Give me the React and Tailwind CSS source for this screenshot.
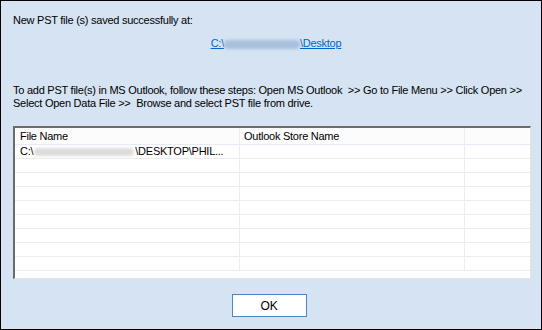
import React from "react";

const rows = Array.from({ length: 9 });

function Blur({ className }) {
  return <span className={`inline-block align-middle rounded-sm blur-[1.5px] ${className}`} />;
}

export default function App() {
  return (
    <div
      className="w-[542px] h-[330px] border border-black bg-[#d5e3f2] text-[11px] text-black tracking-[-0.25px] flex flex-col"
      style={{ fontFamily: '"Liberation Sans", Arial, sans-serif' }}
    >
      <div className="pl-3 pt-[12px] leading-[14px]">New PST file (s) saved successfully at:</div>

      <div className="flex justify-center pl-[10px] mt-[9px] leading-[14px]">
        <span className="text-[#0066cc] underline whitespace-nowrap">
          C:\
          <Blur className="w-[76px] h-[9px] bg-[#a9c0dc]" />
          \Desktop
        </span>
      </div>

      <div className="pl-3 mt-[34px] leading-[13px] whitespace-nowrap">
        <div>To add PST file(s) in MS Outlook, follow these steps: Open MS Outlook&nbsp; &gt;&gt; Go to File Menu &gt;&gt; Click Open &gt;&gt;</div>
        <div>Select Open Data File &gt;&gt;&nbsp; Browse and select PST file from drive.</div>
      </div>

      <div className="mx-3 mt-[16px] w-[518px] h-[153px] border-t-2 border-l-2 border-t-[#6b6b6b] border-l-[#6b6b6b] border-r border-b border-r-[#e3e3e3] border-b-[#e3e3e3] bg-white overflow-hidden">
        <div className="flex h-[17px] items-center bg-[#fcfcfc] border-b border-[#e4ebf4]">
          <div className="w-[225px] pl-[5px] border-r border-[#e8eef5] h-full flex items-center">File Name</div>
          <div className="w-[225px] pl-[4px] border-r border-[#e8eef5] h-full flex items-center">Outlook Store Name</div>
          <div className="flex-1" />
        </div>
        {rows.map((_, i) => (
          <div key={i} className="flex h-[14px] border-b border-[#ececec]">
            <div className="w-[225px] pl-[5px] border-r border-[#ececec] flex items-center whitespace-nowrap overflow-hidden leading-[13px]">
              {i === 0 && (
                <>
                  C:\
                  <Blur className="w-[100px] h-[8px] bg-[#dcdcdc] mx-[1px]" />
                  \DESKTOP\PHIL...
                </>
              )}
            </div>
            <div className="w-[225px] border-r border-[#ececec]" />
            <div className="flex-1" />
          </div>
        ))}
      </div>

      <div className="flex justify-center mt-[15px] pr-[4px]">
        <button className="w-[75px] h-[23px] border border-[#4a86c8] bg-white text-[12px] leading-none">OK</button>
      </div>
    </div>
  );
}
